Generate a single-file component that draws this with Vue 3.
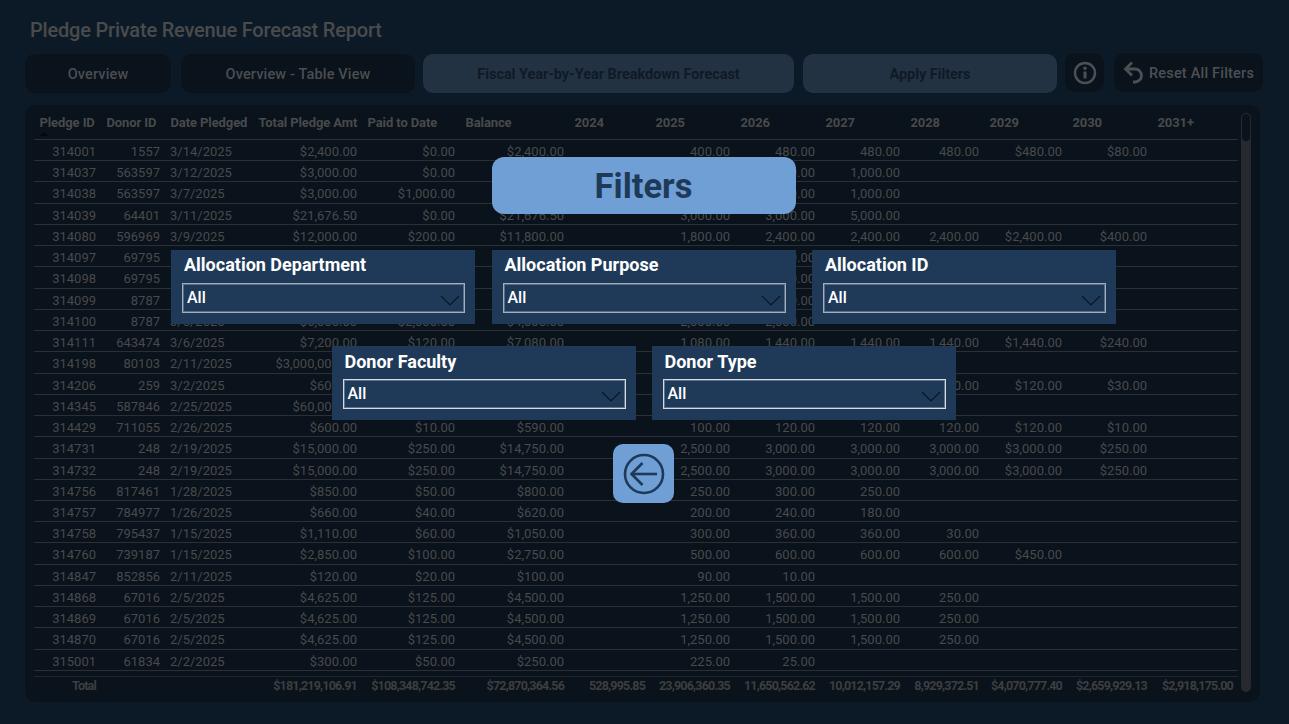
<script setup>
const columns = ['Pledge ID','Donor ID','Date Pledged','Total Pledge Amt','Paid to Date','Balance','2024','2025','2026','2027','2028','2029','2030','2031+']
const rows = [
 ['314001','1557','3/14/2025','$2,400.00','$0.00','$2,400.00','','400.00','480.00','480.00','480.00','$480.00','$80.00',''],
 ['314037','563597','3/12/2025','$3,000.00','$0.00','$3,000.00','','500.00','600.00','1,000.00','','','',''],
 ['314038','563597','3/7/2025','$3,000.00','$1,000.00','$2,000.00','','','1,000.00','1,000.00','','','',''],
 ['314039','64401','3/11/2025','$21,676.50','$0.00','$21,676.50','','3,000.00','3,000.00','5,000.00','','','',''],
 ['314080','596969','3/9/2025','$12,000.00','$200.00','$11,800.00','','1,800.00','2,400.00','2,400.00','2,400.00','$2,400.00','$400.00',''],
 ['314097','69795','3/8/2025','$3,000.00','$50.00','$2,950.00','','450.00','600.00','','','','',''],
 ['314098','69795','3/8/2025','$3,000.00','$50.00','$2,950.00','','450.00','600.00','','','','',''],
 ['314099','8787','3/6/2025','$6,000.00','$2,000.00','$4,000.00','','2,000.00','2,000.00','','','','',''],
 ['314100','8787','3/6/2025','$6,000.00','$2,000.00','$4,000.00','','2,000.00','2,000.00','','','','',''],
 ['314111','643474','3/6/2025','$7,200.00','$120.00','$7,080.00','','1,080.00','1,440.00','1,440.00','1,440.00','$1,440.00','$240.00',''],
 ['314198','80103','2/11/2025','$3,000,000.00','','','','','','','','','',''],
 ['314206','259','3/2/2025','$600.00','$10.00','$590.00','','100.00','120.00','120.00','120.00','$120.00','$30.00',''],
 ['314345','587846','2/25/2025','$60,000.00','','','','','','','','','',''],
 ['314429','711055','2/26/2025','$600.00','$10.00','$590.00','','100.00','120.00','120.00','120.00','$120.00','$10.00',''],
 ['314731','248','2/19/2025','$15,000.00','$250.00','$14,750.00','','2,500.00','3,000.00','3,000.00','3,000.00','$3,000.00','$250.00',''],
 ['314732','248','2/19/2025','$15,000.00','$250.00','$14,750.00','','2,500.00','3,000.00','3,000.00','3,000.00','$3,000.00','$250.00',''],
 ['314756','817461','1/28/2025','$850.00','$50.00','$800.00','','250.00','300.00','250.00','','','',''],
 ['314757','784977','1/26/2025','$660.00','$40.00','$620.00','','200.00','240.00','180.00','','','',''],
 ['314758','795437','1/15/2025','$1,110.00','$60.00','$1,050.00','','300.00','360.00','360.00','30.00','','',''],
 ['314760','739187','1/15/2025','$2,850.00','$100.00','$2,750.00','','500.00','600.00','600.00','600.00','$450.00','',''],
 ['314847','852856','2/11/2025','$120.00','$20.00','$100.00','','90.00','10.00','','','','',''],
 ['314868','67016','2/5/2025','$4,625.00','$125.00','$4,500.00','','1,250.00','1,500.00','1,500.00','250.00','','',''],
 ['314869','67016','2/5/2025','$4,625.00','$125.00','$4,500.00','','1,250.00','1,500.00','1,500.00','250.00','','',''],
 ['314870','67016','2/5/2025','$4,625.00','$125.00','$4,500.00','','1,250.00','1,500.00','1,500.00','250.00','','',''],
 ['315001','61834','2/2/2025','$300.00','$50.00','$250.00','','225.00','25.00','','','','',''],
]
const totals = ['Total','','','$181,219,106.91','$108,348,742.35','$72,870,364.56','528,995.85','23,906,360.35','11,650,562.62','10,012,157.29','8,929,372.51','$4,070,777.40','$2,659,929.13','$2,918,175.00']
const filterRowOne = ['Allocation Department','Allocation Purpose','Allocation ID']
const filterRowTwo = ['Donor Faculty','Donor Type']
</script>

<template>
  <div class="page">
    <h1 class="title">Pledge Private Revenue Forecast Report</h1>
    <div class="toolbar">
      <div class="btn dark w-overview">Overview</div>
      <div class="btn dark w-table">Overview - Table View</div>
      <div class="btn slate w-fiscal">Fiscal Year-by-Year Breakdown Forecast</div>
      <div class="btn slate w-apply">Apply Filters</div>
      <div class="tool w-info">
        <svg width="24" height="24" viewBox="0 0 24 24" fill="none" stroke="#4d5052">
          <circle cx="12" cy="12" r="10" stroke-width="2.4"/>
          <path d="M12 10.5v7" stroke-width="3"/>
          <circle cx="12" cy="7.2" r="1.7" fill="#4d5052" stroke="none"/>
        </svg>
      </div>
      <div class="tool w-reset">
        <svg width="20" height="26" viewBox="0 0 20 26" fill="none" stroke="#4d5052" stroke-width="2.8">
          <path d="M9 2.5 2.5 9 9 15.5"/>
          <path d="M2.5 9h9.5a6.5 6.5 0 0 1 6.5 6.5v0a6.5 6.5 0 0 1-6.5 6.5H10"/>
        </svg>
        <span>Reset All Filters</span>
      </div>
    </div>

    <div class="panel">
      <div class="table">
        <div class="row head">
          <div v-for="c in columns" :key="c" class="cell">{{ c }}</div>
          <i class="sort"></i>
        </div>
        <div v-for="r in rows" :key="r[0]" class="row body">
          <div v-for="(v, i) in r" :key="i" class="cell" :class="{ left: i === 2 }">{{ v }}</div>
        </div>
        <div class="row total">
          <div v-for="(v, i) in totals" :key="i" class="cell">{{ v }}</div>
        </div>
      </div>
      <div class="scrollbar"><div class="thumb"></div></div>
    </div>

    <div class="overlay">
      <div class="filters-title">Filters</div>
      <div class="filter-row first">
        <div v-for="f in filterRowOne" :key="f" class="slicer">
          <div class="slicer-name">{{ f }}</div>
          <div class="select">
            <span>All</span>
            <svg width="20" height="11" viewBox="0 0 20 11" fill="none" stroke="#0b1622" stroke-width="1.2"><path d="M1 1l9 9 9-9"/></svg>
          </div>
        </div>
      </div>
      <div class="filter-row second">
        <div v-for="f in filterRowTwo" :key="f" class="slicer bright">
          <div class="slicer-name">{{ f }}</div>
          <div class="select">
            <span>All</span>
            <svg width="20" height="11" viewBox="0 0 20 11" fill="none" stroke="#0b1622" stroke-width="1.2"><path d="M1 1l9 9 9-9"/></svg>
          </div>
        </div>
      </div>
      <div class="back">
        <svg width="46" height="46" viewBox="0 0 46 46" fill="none" stroke="#1f3a59" stroke-width="2.6">
          <circle cx="23" cy="23" r="19"/>
          <path d="M36 23H11"/>
          <path d="M21.5 12 10.5 23l11 11"/>
        </svg>
      </div>
    </div>
  </div>
</template>

<style>
html, body { margin: 0; background: #0c1a28; }
</style>

<style scoped>
.page {
  position: relative;
  width: 1289px;
  height: 724px;
  box-sizing: border-box;
  padding: 18px 26px 22px 25px;
  overflow: hidden;
  background: #0c1a28;
  font-family: Roboto, "Liberation Sans", sans-serif;
  display: flex;
  flex-direction: column;
}
.title {
  margin: 0 0 0 5px;
  height: 24px;
  font-size: 20px;
  line-height: 24px;
  font-weight: 500;
  color: #4a4b4c;
  letter-spacing: -0.2px;
}
.toolbar {
  display: flex;
  align-items: flex-start;
  margin-top: 11px;
  height: 40px;
}
.btn {
  height: 39px;
  margin-top: 1px;
  padding-top: 1px;
  box-sizing: border-box;
  border-radius: 10px;
  display: flex;
  align-items: center;
  justify-content: center;
  font-size: 14.5px;
  font-weight: 500;
  letter-spacing: 0.15px;
}
.dark { background: #0a121b; color: #4b4e50; }
.slate { background: #233243; color: #0f1a26; font-weight: 700; letter-spacing: -0.05px; }
.w-overview { width: 146px; margin-right: 10px; }
.w-table { width: 234px; margin-right: 8px; }
.w-fiscal { width: 371px; margin-right: 9px; }
.w-apply { width: 254px; margin-right: 8px; }
.tool {
  height: 39px;
  box-sizing: border-box;
  background: #0a121b;
  border-radius: 10px;
  display: flex;
  align-items: center;
  justify-content: center;
  color: #4d5052;
  font-size: 14.5px;
  font-weight: 500;
}
.w-info { width: 39px; margin-right: 10px; }
.w-reset { width: 149px; gap: 6px; letter-spacing: 0.2px; padding-top: 1px; }
.panel {
  position: relative;
  margin-top: 12px;
  width: 1235px;
  height: 597px;
  box-sizing: border-box;
  padding: 9px 0 0 9px;
  background: #0a121b;
  border-radius: 10px;
}
.row {
  display: grid;
  grid-template-columns: 67px 64px 88px 109px 98px 109px 81px 85px 85px 85px 79px 83px 85px 86px;
  width: 1204px;
  box-sizing: border-box;
  position: relative;
}
.cell {
  white-space: nowrap;
  color: #484a4b;
}
.head {
  height: 26px;
  border-bottom: 1px solid #2c3034;
  font-size: 13px;
  font-weight: 700;
  line-height: 18px;
}
.head .cell { padding-left: 5.5px; letter-spacing: -0.1px; }
.sort {
  position: absolute;
  left: 6px;
  bottom: 3px;
  width: 0;
  height: 0;
  border-left: 4px solid transparent;
  border-right: 4px solid transparent;
  border-bottom: 4px solid #04080c;
}
.body {
  height: 21.24px;
  border-bottom: 1px solid #2c3034;
  font-size: 13px;
  line-height: 24px;
}
.body .cell {
  text-align: right;
  padding-right: 5px;
}
.body .cell.left { text-align: left; padding-left: 5px; padding-right: 0; }
.total {
  height: 26px;
  margin-top: 5px;
  border-top: 1px solid #22262a;
  font-size: 12.5px;
  font-weight: 700;
  line-height: 17px;
}
.total .cell {
  text-align: right;
  padding-right: 5px;
  letter-spacing: -0.8px;
  color: #3d3f40;
}
.scrollbar {
  position: absolute;
  left: 1216px;
  top: 8px;
  width: 10px;
  height: 579px;
  border-radius: 5px;
  background: #26292d;
}
.thumb {
  height: 29px;
  border-radius: 5px;
  background: #0a121b;
  border: 1px solid #26292d;
  box-sizing: border-box;
}
.overlay {
  position: absolute;
  left: 171px;
  top: 157px;
  width: 945px;
  display: flex;
  flex-direction: column;
  align-items: center;
}
.filters-title {
  width: 304px;
  height: 57px;
  border-radius: 12px;
  background: #6f9fd5;
  color: #1f3a59;
  font-size: 34.5px;
  font-weight: 700;
  display: flex;
  align-items: center;
  justify-content: center;
}
.filter-row {
  display: flex;
  gap: 16.5px;
}
.first { margin-top: 36px; }
.second { margin-top: 22px; gap: 16px; }
.slicer {
  width: 304px;
  height: 74px;
  box-sizing: border-box;
  background: #1f3a59;
  padding: 4px 10px 0 11px;
}
.bright { padding-top: 5px; }
.slicer-name {
  color: #fff;
  font-size: 18px;
  font-weight: 700;
  line-height: 22px;
  height: 29px;
  padding-left: 2px;
}
.bright .slicer-name { height: 28px; }
.select {
  height: 30px;
  box-sizing: border-box;
  border: 1px solid #a4aeba;
  box-shadow: inset 0 0 0 1px rgba(164, 174, 186, 0.45);
  display: flex;
  align-items: center;
  justify-content: space-between;
  padding: 0 4px 2px 4px;
  color: #fff;
  font-size: 16px;
  font-weight: 500;
}
.select svg { margin-top: 6px; }
.bright .select { border-color: #d8dce1; box-shadow: inset 0 0 0 1px rgba(216, 220, 225, 0.35); }
.back {
  margin-top: 24px;
  width: 61px;
  height: 59px;
  border-radius: 10px;
  background: #6f9fd5;
  display: flex;
  align-items: center;
  justify-content: center;
}
</style>
